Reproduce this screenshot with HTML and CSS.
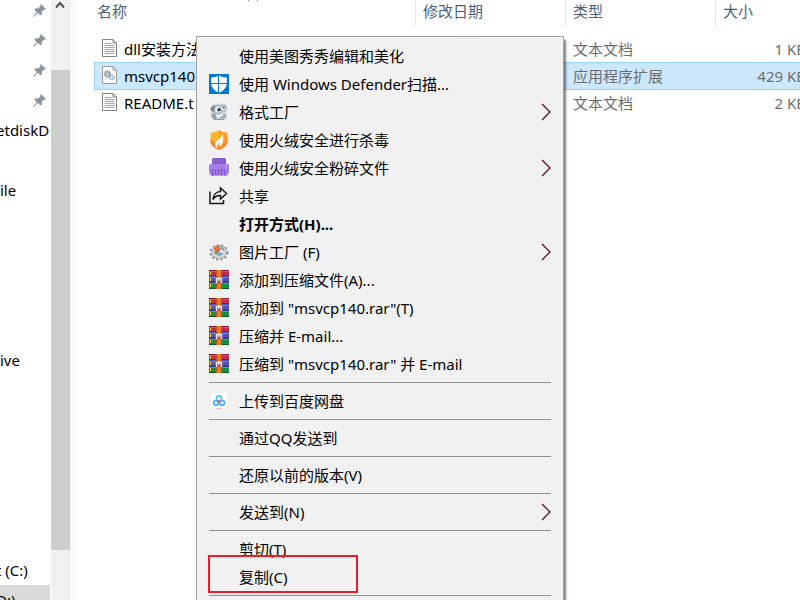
FILE: index.html
```html
<!DOCTYPE html>
<html lang="zh-CN">
<head>
    <meta charset="UTF-8">
    <meta name="viewport" content="width=device-width, initial-scale=1.0">
    <title>msvcp140</title>
    <link rel="stylesheet" href="styles.css">
</head>
<body>
    <svg class="defs" aria-hidden="true">
        <symbol id="pin" viewBox="0 0 13 13">
            <path d="M8 0l5 5-1.3.8-.8-.2-2.200 2.300.2 2.400-1.400 1.200-2.600-2.700L.8 13 0 12.500l3.700-4.300L1.300 5.600l1.200-1.300 2.600.1L7.500 2.200 7.200 1z" fill="#8795a0"/>
        </symbol>
        <symbol id="txt" viewBox="0 0 15 18">
            <path d="M.5.500h10.500l3.500 3.500v13.500H.5z" fill="#fbfbfb" stroke="#808080"/>
            <path d="M11 .5v3.500h3.500" fill="none" stroke="#808080"/>
            <path d="M2.500 4.500h7M2.500 6.500h10M2.500 8.500h10M2.500 10.500h10M2.500 12.500h10M2.500 14.500h10" stroke="#a5a5a5"/>
        </symbol>
        <symbol id="dll" viewBox="0 0 15 18">
            <path d="M.5.500h10.500l3.500 3.500v13.500H.5z" fill="#fbfbfb" stroke="#999"/>
            <path d="M11 .5v3.500h3.500" fill="none" stroke="#999"/>
            <circle cx="5.500" cy="8" r="2.600" fill="none" stroke="#858b90" stroke-width="2" stroke-dasharray="1.300 .6"/>
            <circle cx="5.500" cy="8" r="1.200" fill="none" stroke="#858b90" stroke-width=".6"/>
            <circle cx="9.800" cy="11.500" r="2" fill="none" stroke="#69acd1" stroke-width="1.500" stroke-dasharray="1.200 .5"/>
        </symbol>
        <symbol id="chevron" viewBox="0 0 10 18">
            <path d="M1 1l8 8-8 8" fill="none" stroke="#4b0c18" stroke-width="1.200"/>
        </symbol>
        <symbol id="defender" viewBox="0 0 20 20">
            <path d="M0 0h20v20H0z" fill="#0078d7"/>
            <path d="M10 1.200c2 1.400 4.500 2.200 7.800 2.300v5.500c0 4.700-3.300 7.700-7.800 9.700-4.500-2-7.800-5-7.800-9.700V3.500c3.300-.1 5.800-.9 7.800-2.300z" fill="#fff"/>
            <path d="M9.500 1v18M2 9.500h16" stroke="#0078d7"/>
        </symbol>
        <symbol id="factory" viewBox="0 0 20 20">
            <path d="M2 4l4-2 10-.5 2 3-1 5 1 6-3 2.500H5L1.500 15l1-5z" fill="#cbd3d9"/>
            <path d="M1.500 6L5 3l2 2-2 5-3-1z" fill="#7b8993"/>
            <path d="M2 12l4-1 2 3-1 3H4z" fill="#9aa5ad"/>
            <path d="M12 12l5 0v4l-3 1-3-1z" fill="#a7b3bb"/>
            <circle cx="9" cy="7.500" r="3.800" fill="#e7ecef" stroke="#8d9ba6" stroke-width=".8"/>
            <circle cx="14.500" cy="6" r="2.800" fill="#f7f9fa" stroke="#7a8791" stroke-width=".7"/>
            <circle cx="10" cy="7.700" r="1.700" fill="#2e4250"/>
            <circle cx="14.800" cy="5.500" r="1.100" fill="#2e4250"/>
            <path d="M7 14c2.500.8 5 .3 7-2" fill="none" stroke="#f5f7f8" stroke-width="1.500"/>
            <path d="M5 17.500h10" stroke="#8b98a2"/>
        </symbol>
        <symbol id="huorong" viewBox="0 0 20 20">
            <path d="M10 0c2.500 1.700 5.400 2.500 8.500 2.700v8.500c0 4-4.500 6.800-8.500 8.800z" fill="#ff9a1f"/>
            <path d="M10 0C7.500 1.700 4.600 2.500 1.500 2.700v8.500c0 4 4.500 6.800 8.500 8.800z" fill="#ffb52c"/>
            <path d="M1.500 9.500v1.700c0 4 4.500 6.800 8.500 8.800 4-2 8.500-4.800 8.500-8.800V9l-6 8z" fill="#f8842a"/>
            <path d="M13 3.500c.3 2.800-1.200 4-3.500 6-2 1.800-3.800 3.600-3.500 5.700.2 1.200 1 2 2.500 2.700-.8-2.300.2-3.600 2.200-5.400.4 1.300 0 2.800-1 4.500 4-1.600 6.300-7.500 3.300-13.500z" fill="#fff"/>
        </symbol>
        <symbol id="shredder" viewBox="0 0 20 20">
            <path d="M3 1.500Q3 0 4.500 0h11Q17 0 17 1.500V8H3z" fill="#8860cc"/>
            <path d="M1.500 6h17Q20 6 20 7.500v7.500l-1 1-1 2h-3l-1-1-1 1h-2l-1-1-1 1H7l-1-1-1 1H2l-1-2-1-1V7.500Q0 6 1.500 6z" fill="#a67eea"/>
            <path d="M3.500 11v6M6.500 11v6M9.500 11v6M12.500 11v6M15.500 11v6" stroke="#7d56c2" stroke-width="1.200"/>
            <path d="M16 8h2" stroke="#d8c5fb"/>
        </symbol>
        <symbol id="share" viewBox="0 0 20 20">
            <path d="M1 5.500v12h13.500V14" fill="none" stroke="#1a1a1a" stroke-width="1.500"/>
            <path d="M4 13.500C4.200 8.500 7.500 5.700 11.500 5.500V2l6 5.500-6 5.500V9.500C8 9.300 5.800 10.500 4 13.500z" fill="none" stroke="#1a1a1a" stroke-width="1.500"/>
        </symbol>
        <symbol id="gear" viewBox="0 0 20 20">
            <ellipse cx="10" cy="10.500" rx="8.200" ry="7" fill="none" stroke="#898d90" stroke-width="2.600" stroke-dasharray="2 2.200"/>
            <ellipse cx="10" cy="10" rx="7.500" ry="6.500" fill="#d3d6d8" stroke="#a5abaf" stroke-width=".8"/>
            <path d="M4 8l3-4 4-1-1 5z" fill="#d97845"/>
            <path d="M11 3l4 3 .5 3-5-1z" fill="#93a8b4"/>
            <path d="M5 9l4 0 0 4-3-1z" fill="#6d9d60"/>
            <path d="M10 9l4 0-1 4-4 1z" fill="#5aa0c2"/>
            <circle cx="8.500" cy="7.500" r="2.200" fill="#df4a25"/>
            <circle cx="8.500" cy="7.200" r="1" fill="#f3b545"/>
            <circle cx="12.500" cy="9.500" r="1.500" fill="#f6f2e8"/>
        </symbol>
        <symbol id="rar" viewBox="0 0 20 20">
            <path d="M0 0h20v6H0z" fill="#c72c50"/>
            <path d="M0 6h20v7H0z" fill="#5350b6"/>
            <path d="M0 13h20v6H0z" fill="#178f3f"/>
            <path d="M0 .5h20" stroke="#7e1a38"/>
            <path d="M0 1.500h20" stroke="#dd5071"/>
            <path d="M0 7.500h20" stroke="#7d7bd8"/>
            <path d="M0 13.500h20" stroke="#3eb15c"/>
            <path d="M0 5.500h20" stroke="#841d3b"/>
            <path d="M0 12h20" stroke="#292960"/>
            <path d="M0 18.500h20" stroke="#0d572b"/>
            <path d="M1.500 2v3M1.500 8v3M1.500 14v3" stroke="#f1d045"/>
            <path d="M7 0h6v19H7z" fill="#e87b22"/>
            <path d="M7.500 0v19M12.500 0v19" stroke="#b95419"/>
            <path d="M7 7h6v6H7z" fill="#b5553d"/>
            <path d="M7.500 13V8.500h5V13" fill="none" stroke="#eee" stroke-width="1.400"/>
            <path d="M10 7v4" stroke="#fff" stroke-width="1.200"/>
        </symbol>
        <symbol id="baidu" viewBox="0 0 20 20">
            <rect x="2" y="2" width="16" height="16" rx="3" fill="#fff"/>
            <circle cx="10" cy="7.500" r="2.600" fill="none" stroke="#54c2fb" stroke-width="1.700"/>
            <circle cx="7" cy="12" r="2.300" fill="none" stroke="#4aaff5" stroke-width="1.700"/>
            <circle cx="13.200" cy="12" r="2.300" fill="none" stroke="#4aaff5" stroke-width="1.700"/>
            <path d="M8.500 11L10 9.500l1.700 1.500" fill="none" stroke="#f45b6b" stroke-width="1.500"/>
            <path d="M7 17.500h6" stroke="#f6b6be"/>
        </symbol>
    </svg>

    <div class="explorer">
        <nav class="sidebar">
            <ul class="tree">
                <li class="pinned"><svg><use href="#pin"/></svg></li>
                <li class="pinned"><svg><use href="#pin"/></svg></li>
                <li class="pinned"><svg><use href="#pin"/></svg></li>
                <li class="pinned"><svg><use href="#pin"/></svg></li>
                <li class="cut">etdiskDo</li>
                <li></li>
                <li>ile</li>
            </ul>
            <ul class="tree cloud">
                <li>ive</li>
            </ul>
            <ul class="tree drives">
                <li class="cut">t (C:)</li>
                <li class="cut current">D:)</li>
            </ul>
        </nav>
        <div class="scrollbar">
            <svg class="scroll-up" viewBox="0 0 10 8"><path d="M1 6.500l4-4.500 4 4.500" fill="none" stroke="#505050" stroke-width="2"/></svg>
            <div class="thumb"></div>
        </div>

        <main class="files">
            <svg class="sort" viewBox="0 0 10 1"><path d="M0 .5h1M9 .5h1" stroke="#888"/></svg>
            <table>
                <thead>
                    <tr>
                        <th class="col-name">名称</th>
                        <th class="col-date">修改日期</th>
                        <th class="col-type">类型</th>
                        <th class="col-size">大小</th>
                    </tr>
                </thead>
                <tbody>
                    <tr>
                        <td><div class="file"><svg><use href="#txt"/></svg>dll安装方法</div></td>
                        <td></td>
                        <td>文本文档</td>
                        <td>1 KB</td>
                    </tr>
                    <tr class="selected">
                        <td><div class="file"><svg><use href="#dll"/></svg>msvcp140</div></td>
                        <td></td>
                        <td>应用程序扩展</td>
                        <td>429 KB</td>
                    </tr>
                    <tr>
                        <td><div class="file"><svg><use href="#txt"/></svg>README.t</div></td>
                        <td></td>
                        <td>文本文档</td>
                        <td>2 KB</td>
                    </tr>
                </tbody>
            </table>
        </main>
    </div>

    <div class="menu">
        <button class="item"><span class="icon"></span>使用美图秀秀编辑和美化</button>
        <button class="item"><svg class="icon"><use href="#defender"/></svg>使用 Windows Defender扫描...</button>
        <button class="item"><svg class="icon"><use href="#factory"/></svg>格式工厂<svg class="more"><use href="#chevron"/></svg></button>
        <button class="item"><svg class="icon"><use href="#huorong"/></svg>使用火绒安全进行杀毒</button>
        <button class="item"><svg class="icon"><use href="#shredder"/></svg>使用火绒安全粉碎文件<svg class="more"><use href="#chevron"/></svg></button>
        <button class="item"><svg class="icon"><use href="#share"/></svg>共享</button>
        <button class="item default"><span class="icon"></span>打开方式(H)...</button>
        <button class="item"><svg class="icon"><use href="#gear"/></svg>图片工厂 (F)<svg class="more"><use href="#chevron"/></svg></button>
        <button class="item"><svg class="icon"><use href="#rar"/></svg>添加到压缩文件(A)...</button>
        <button class="item"><svg class="icon"><use href="#rar"/></svg>添加到 "msvcp140.rar"(T)</button>
        <button class="item"><svg class="icon"><use href="#rar"/></svg>压缩并 E-mail...</button>
        <button class="item"><svg class="icon"><use href="#rar"/></svg>压缩到 "msvcp140.rar" 并 E-mail</button>
        <hr>
        <button class="item"><svg class="icon"><use href="#baidu"/></svg>上传到百度网盘</button>
        <hr>
        <button class="item"><span class="icon"></span>通过QQ发送到</button>
        <hr>
        <button class="item"><span class="icon"></span>还原以前的版本(V)</button>
        <hr>
        <button class="item"><span class="icon"></span>发送到(N)<svg class="more"><use href="#chevron"/></svg></button>
        <hr>
        <button class="item"><span class="icon"></span>剪切(T)</button>
        <button class="item marked"><span class="icon"></span>复制(C)</button>
        <hr>
    </div>
</body>
</html>
```
FILE: styles.css
```css
* {
    box-sizing: border-box;
}
body {
    margin: 0;
    height: 100vh;
    overflow: hidden;
    position: relative;
    background-color: #fff;
    color: #000;
    font-family: "Noto Sans", "Noto Sans CJK SC", sans-serif;
    font-size: 15px;
    line-height: 20px;
}
.defs {
    position: absolute;
    width: 0;
    height: 0;
}
.explorer {
    display: flex;
    height: 100%;
}

/* left tree */
.sidebar {
    width: 50px;
    flex: none;
    overflow: hidden;
}
.tree {
    list-style: none;
    margin: -5px 0 0;
    padding: 0;
}
.tree li {
    height: 30px;
    line-height: 30px;
    white-space: nowrap;
}
.tree .pinned {
    display: flex;
    align-items: center;
    justify-content: flex-end;
    padding-right: 4px;
}
.pinned svg {
    width: 13px;
    height: 13px;
}
.tree .cut {
    text-indent: -4px;
}
.tree .current {
    background-color: #d9d9d9;
}
.tree.cloud {
    margin-top: 140px;
}
.tree.drives {
    margin-top: 180px;
}

.scrollbar {
    flex: none;
    width: 20px;
    margin-left: 1px;
    background-color: #f0f0f0;
    display: flex;
    flex-direction: column;
}
.scroll-up {
    width: 10px;
    height: 8px;
    margin: 1px 4px 61px;
}
.thumb {
    width: 19px;
    height: 80%;
    background-color: #cdcdcd;
}

/* file list */
.files {
    flex: 1;
    min-width: 0;
    margin-left: 2px;
    padding-left: 20px;
    border-left: 1px solid #f2f2f2;
    overflow: hidden;
}
.sort {
    position: absolute;
    left: 248px;
    top: 0;
    width: 10px;
    height: 1px;
}
table {
    table-layout: fixed;
    width: 721px;
    border-collapse: separate;
    border-spacing: 0;
}
th {
    height: 26px;
    padding: 0 7px 4px;
    border-right: 1px solid #e5e5e5;
    color: #4c607a;
    font-weight: normal;
    text-align: left;
}
.col-name {
    width: 322px;
    padding-left: 3px;
}
.col-date,
.col-type {
    width: 150px;
}
tbody::before {
    content: "";
    display: block;
    height: 9px;
}
td {
    height: 27px;
    padding: 0 7px 2px;
    color: #6d6d6d;
    white-space: nowrap;
}
tr:first-child td {
    padding-bottom: 0;
}
td:first-child {
    color: #000;
}
td:last-child {
    padding-right: 9px;
    text-align: right;
}
.file {
    display: flex;
    align-items: center;
    gap: 7px;
}
.file svg {
    width: 15px;
    height: 18px;
    margin: 0 0 2px 1px;
}
.selected td {
    height: 28px;
    padding-bottom: 0;
    background-color: #cce8ff;
    border-top: 1px solid #99d1ff;
    border-bottom: 1px solid #99d1ff;
}
.selected td:first-child {
    border-left: 1px solid #99d1ff;
    padding-left: 6px;
}

/* context menu */
.menu {
    position: absolute;
    left: 196px;
    top: 36px;
    width: 368px;
    padding: 5px 12px;
    background-color: #f1f1f1;
    border: 1px solid #a0a0a0;
    box-shadow: 2px 4px 2px rgba(0, 0, 0, 0.5);
}
.item {
    display: flex;
    align-items: center;
    gap: 10px;
    width: 100%;
    height: 28px;
    padding: 0;
    border: none;
    background: none;
    color: #000;
    font: inherit;
    text-align: left;
    white-space: nowrap;
}
.icon {
    flex: none;
    width: 20px;
    height: 20px;
}
.more {
    width: 10px;
    height: 18px;
    margin-left: auto;
}
.item.default {
    font-weight: bold;
}
.menu hr {
    height: 1px;
    margin: 4px 0;
    border: none;
    background-color: #919191;
}
.marked {
    position: relative;
}
.marked::after {
    content: "";
    box-sizing: border-box;
    position: absolute;
    left: -1px;
    top: -8px;
    width: 150px;
    height: 38px;
    border: 2px solid #ed1c24;
}
```
